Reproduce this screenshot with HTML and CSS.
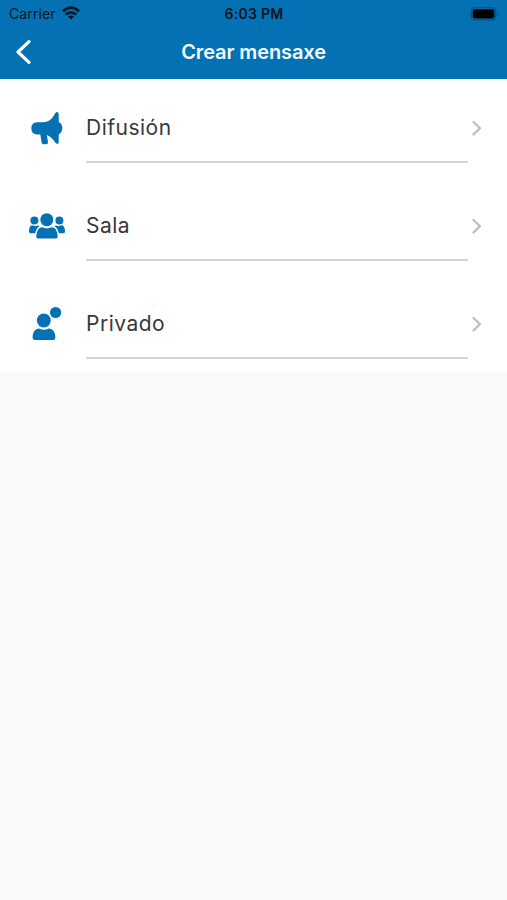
FILE: index.html
```html
<!DOCTYPE html>
<html lang="gl">
<head>
    <meta charset="UTF-8">
    <meta name="viewport" content="width=device-width, initial-scale=1.0">
    <link rel="stylesheet" href="styles.css">
    <title>Crear mensaxe</title>
</head>
<body>
    <header class="header">
        <div class="status-bar">
            <div class="carrier">
                <span>Carrier</span>
                <svg class="wifi" width="18" height="14" viewBox="0 0 18 14" fill="none" stroke="#071622" stroke-width="2.7">
                    <path d="M1 5.2 Q9 -1.8 17 5.2"/>
                    <path d="M3.8 8.6 Q9 4.1 14.2 8.6"/>
                    <path d="M6 10.6 Q9 8.2 12 10.6 L9 13.6 Z" fill="#071622" stroke="none"/>
                </svg>
            </div>
            <div class="time">6:03 PM</div>
            <svg class="battery" width="29" height="14" viewBox="0 0 29 14">
                <rect x="1.2" y="0.7" width="24.6" height="12.2" rx="3.5" fill="none" stroke="#04507f" stroke-width="1.2"/>
                <rect x="2.7" y="2.2" width="21.6" height="9.2" rx="1.8" fill="#000"/>
                <path d="M27.2 5 Q29.6 6.8 27.2 8.6 Z" fill="#04507f"/>
            </svg>
        </div>
        <div class="nav-bar">
            <svg class="back" width="16" height="26" viewBox="0 0 16 26">
                <path d="M14 2.7 L3 13 L14 23.3"/>
            </svg>
            <h1 class="title">Crear mensaxe</h1>
        </div>
    </header>

    <main class="list">
        <div class="item">
            <svg class="icon" width="40" height="40" viewBox="0 0 40 40">
                <path d="M10 14.3 H16 C22 13.8 25.6 10.6 28 5.4 Q30.8 2.4 31.7 6 V13.8 Q35.3 16 35.3 20 Q35.3 24.2 31.7 26.4 V34.2 Q31 37.4 28.2 34.6 Q25 29 19.8 27 L21 34 Q21.1 36.2 19.2 36.2 H16.4 Q14.9 36.2 14.6 34.4 L13.3 26.6 H10 Q4.3 26.3 4.3 20.3 Q4.3 14.6 10 14.3 Z"/>
            </svg>
            <div class="label">Difusión</div>
            <svg class="chevron" width="12" height="18" viewBox="0 0 12 18"><path d="M2.5 3 L9 9.2 L2.5 15.4"/></svg>
        </div>
        <div class="item">
            <svg class="icon" width="40" height="40" viewBox="0 0 40 40">
                <circle cx="19.8" cy="13.7" r="6.5"/>
                <circle cx="7.4" cy="14.5" r="4"/>
                <circle cx="32.4" cy="14.5" r="4"/>
                <path d="M11 32.5 Q9.1 32.5 9.3 30.5 C9.7 24.5 12 21.3 15.3 21.3 Q20 23.5 24.7 21.3 C28 21.3 30.3 24.5 30.7 30.5 Q30.9 32.5 29 32.5 Z"/>
                <path d="M3.5 27.2 Q2 27.2 2 25.8 C2 22 3.3 19.3 5.5 19.3 Q8 20.4 11.4 19.6 L12.4 20.3 Q9.2 22.4 8.3 27.2 Z"/>
                <path d="M36.5 27.2 Q38 27.2 38 25.8 C38 22 36.7 19.3 34.5 19.3 Q32 20.4 28.6 19.6 L27.6 20.3 Q30.8 22.4 31.7 27.2 Z"/>
            </svg>
            <div class="label">Sala</div>
            <svg class="chevron" width="12" height="18" viewBox="0 0 12 18"><path d="M2.5 3 L9 9.2 L2.5 15.4"/></svg>
        </div>
        <div class="item">
            <svg class="icon" width="40" height="40" viewBox="0 0 40 40">
                <circle cx="28.6" cy="8.5" r="5.6"/>
                <circle cx="16.8" cy="16.5" r="6.9"/>
                <path d="M8 36 Q5.6 36 5.6 33.8 C5.6 28.3 8 24.7 12.3 24.6 Q17 27 21.7 24.6 C26 24.7 28.4 28.3 28.4 33.8 Q28.4 36 26 36 Z"/>
            </svg>
            <div class="label">Privado</div>
            <svg class="chevron" width="12" height="18" viewBox="0 0 12 18"><path d="M2.5 3 L9 9.2 L2.5 15.4"/></svg>
        </div>
    </main>
</body>
</html>
```
FILE: styles.css
```css
body {
    margin: 0;
    min-height: 100vh;
    background-color: #fafafa;
    font-family: Inter, Roboto, sans-serif;
}

.header {
    height: 79px;
    background-color: #0471b4;
}

.status-bar {
    display: grid;
    grid-template-columns: 1fr auto 1fr;
    align-items: center;
    height: 27px;
    padding: 0 8px 0 9px;
    color: #071622;
    font-size: 14px;
}

.carrier {
    display: flex;
    align-items: center;
    gap: 6px;
    letter-spacing: 0.1px;
}

.wifi {
    margin-top: -2px;
}

.time {
    font-weight: 600;
    letter-spacing: 0.3px;
}

.battery {
    justify-self: end;
}

.nav-bar {
    display: grid;
    grid-template-columns: 40px 1fr 40px;
    align-items: center;
    height: 50px;
}

.back {
    margin-left: 15px;
}

.back path {
    fill: none;
    stroke: #fff;
    stroke-width: 3.2;
    stroke-linecap: round;
    stroke-linejoin: round;
}

.title {
    margin: 0;
    color: #f2f9fd;
    font-size: 20px;
    font-weight: 600;
    letter-spacing: -0.1px;
    line-height: 28px;
    text-align: center;
}

.list {
    height: 293px;
    background-color: #fff;
}

.item {
    display: grid;
    grid-template-columns: 40px 382px 12px;
    align-items: center;
    height: 98px;
    padding-left: 27px;
}

.item .icon {
    fill: #0471b4;
}

.label {
    box-sizing: border-box;
    width: 382px;
    height: 70px;
    margin-left: 19px;
    border-bottom: 2px solid #d5d5d5;
    color: #383838;
    font-size: 21px;
    letter-spacing: 0.5px;
    line-height: 70px;
}

.chevron {
    margin-left: 22px;
}

.chevron path {
    fill: none;
    stroke: #bdbdbd;
    stroke-width: 2.2;
    stroke-linecap: round;
    stroke-linejoin: round;
}
```
